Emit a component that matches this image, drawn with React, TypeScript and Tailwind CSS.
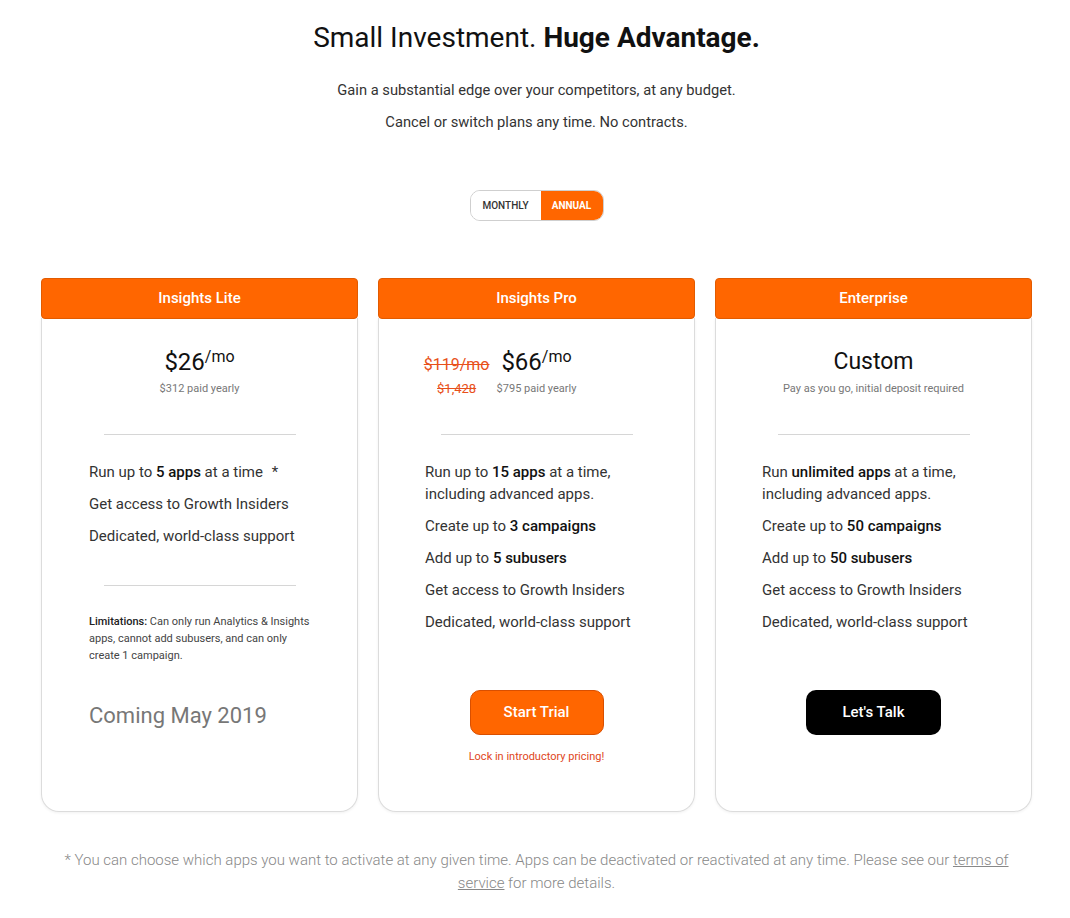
import React from "react";

const orange = "bg-[#ff6600]";

const Feature = ({ children }: { children: React.ReactNode }) => (
  <li className="mb-[10px] text-[15px] leading-[22px] text-[#333]">{children}</li>
);

const B = ({ children }: { children: React.ReactNode }) => (
  <span className="font-medium text-[#111]">{children}</span>
);

const Card = ({
  title,
  children,
}: {
  title: string;
  children: React.ReactNode;
}) => (
  <div className="flex flex-col">
    <div
      className={`h-[41px] rounded-[4px] border border-[#e25b00] ${orange} flex items-center justify-center text-[15px] font-medium text-white`}
    >
      {title}
    </div>
    <div className="-mt-[1px] h-[494px] rounded-b-[18px] border border-t-0 border-[#dcdcdc] shadow-[0_1px_3px_rgba(0,0,0,0.06)]">
      {children}
    </div>
  </div>
);

const Divider = () => <div className="mx-auto h-px w-[192px] bg-[#d6d6d6]" />;

export default function App() {
  return (
    <div
      className="min-h-screen bg-white pb-[20px] pl-[3px] text-[#222]"
      style={{ fontFamily: "Roboto, 'Liberation Sans', sans-serif" }}
    >
      <h1 className="pt-[20px] text-center text-[28px] leading-[36px] text-[#111]">
        Small Investment. <span className="font-bold">Huge Advantage.</span>
      </h1>
      <p className="mt-[24px] text-center text-[14.7px] leading-[20px] text-[#333]">
        Gain a substantial edge over your competitors, at any budget.
      </p>
      <p className="mt-[12px] text-center text-[14.7px] leading-[20px] text-[#333]">
        Cancel or switch plans any time. No contracts.
      </p>

      <div className="mt-[58px] flex justify-center">
        <div className="flex h-[31px] overflow-hidden rounded-[10px] border border-[#cfcfcf]">
          <button className="w-[70px] bg-white text-[10px] font-medium text-[#333]">
            MONTHLY
          </button>
          <button className={`w-[62px] ${orange} text-[10px] font-bold text-white`}>
            ANNUAL
          </button>
        </div>
      </div>

      <div className="mx-auto mt-[57px] grid w-[991px] grid-cols-3 gap-[20px]">
        <Card title="Insights Lite">
          <div className="pt-[28px] text-center">
            <div className="text-[24px] leading-[32px] text-[#111]">
              $26<sup className="text-[16px]">/mo</sup>
            </div>
            <div className="mt-[3px] text-[11px] leading-[16px] text-[#777]">
              $312 paid yearly
            </div>
          </div>
          <div className="mt-[37px]">
            <Divider />
          </div>
          <ul className="mt-[26px] pl-[47px]">
            <Feature>
              Run up to <B>5 apps</B> at a time <span className="ml-[5px]">*</span>
            </Feature>
            <Feature>Get access to Growth Insiders</Feature>
            <Feature>Dedicated, world-class support</Feature>
          </ul>
          <div className="mt-[38px]">
            <Divider />
          </div>
          <p className="mt-[27px] px-[47px] text-[11px] leading-[17px] text-[#444]">
            <span className="font-medium text-[#222]">Limitations:</span> Can only run
            Analytics &amp; Insights apps, cannot add subusers, and can only create 1
            campaign.
          </p>
          <p className="mt-[38px] pl-[47px] text-[22px] leading-[28px] text-[#777]">
            Coming May 2019
          </p>
        </Card>

        <Card title="Insights Pro">
          <div className="grid grid-cols-[1fr_auto_1fr] items-start pt-[28px]">
            <div className="mr-[5px] flex w-[70px] flex-col items-center justify-self-end pt-[3px]">
              <span className="text-[16px] leading-[32px] text-[#e8501a] line-through">
                $119/mo
              </span>
              <span className="text-[13px] leading-[16px] text-[#e8501a] line-through">
                $1,428
              </span>
            </div>
            <div className="flex flex-col items-center">
              <span className="text-[24px] leading-[32px] text-[#111]">
                $66<sup className="text-[16px]">/mo</sup>
              </span>
              <span className="mt-[3px] text-[11px] leading-[16px] text-[#777]">
                $795 paid yearly
              </span>
            </div>
            <div />
          </div>
          <div className="mt-[37px]">
            <Divider />
          </div>
          <ul className="mt-[26px] pl-[46px] pr-[20px]">
            <Feature>
              Run up to <B>15 apps</B> at a time,
              <br />
              including advanced apps.
            </Feature>
            <Feature>
              Create up to <B>3 campaigns</B>
            </Feature>
            <Feature>
              Add up to <B>5 subusers</B>
            </Feature>
            <Feature>Get access to Growth Insiders</Feature>
            <Feature>Dedicated, world-class support</Feature>
          </ul>
          <div className="mt-[57px] flex justify-center">
            <button
              className={`h-[45px] w-[134px] rounded-[10px] border border-[#d94f00] ${orange} text-[15px] font-medium text-white`}
            >
              Start Trial
            </button>
          </div>
          <p className="mt-[14px] text-center text-[11px] leading-[16px] text-[#e0461b]">
            Lock in introductory pricing!
          </p>
        </Card>

        <Card title="Enterprise">
          <div className="pt-[28px] text-center">
            <div className="text-[23px] leading-[32px] text-[#111]">Custom</div>
            <div className="mt-[3px] text-[11px] leading-[16px] text-[#777]">
              Pay as you go, initial deposit required
            </div>
          </div>
          <div className="mt-[37px]">
            <Divider />
          </div>
          <ul className="mt-[26px] pl-[46px] pr-[20px]">
            <Feature>
              Run <B>unlimited apps</B> at a time,
              <br />
              including advanced apps.
            </Feature>
            <Feature>
              Create up to <B>50 campaigns</B>
            </Feature>
            <Feature>
              Add up to <B>50 subusers</B>
            </Feature>
            <Feature>Get access to Growth Insiders</Feature>
            <Feature>Dedicated, world-class support</Feature>
          </ul>
          <div className="mt-[57px] flex justify-center">
            <button className="h-[45px] w-[135px] rounded-[10px] bg-black text-[15px] font-medium text-white">
              Let's Talk
            </button>
          </div>
        </Card>
      </div>

      <p className="mx-auto mt-[37px] w-[950px] text-center text-[15px] font-light leading-[23px] text-[#888]">
        * You can choose which apps you want to activate at any given time. Apps can be
        deactivated or reactivated at any time. Please see our{" "}
        <a className="underline">terms of service</a> for more details.
      </p>
    </div>
  );
}
